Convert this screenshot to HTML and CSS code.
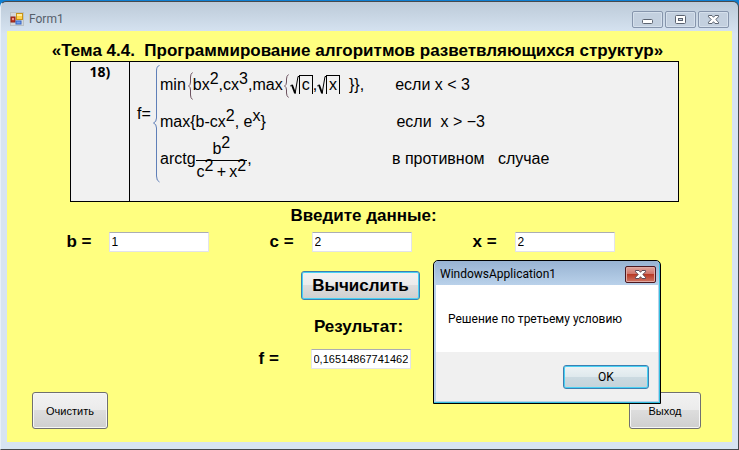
FILE: index.html
```html
<!DOCTYPE html>
<html lang="ru">
<head>
<meta charset="utf-8">
<title>Form1</title>
<link rel="stylesheet" href="styles.css">
</head>
<body>
<main class="window">
  <header class="titlebar">
    <svg class="app-icon" width="14" height="14" viewBox="0 0 14 14" aria-hidden="true">
      <rect x=".5" y=".5" width="13" height="13" fill="#d3d7da" stroke="#b9c0c5"/>
      <rect x="6.500" y="1.500" width="6" height="6" fill="#ffd34d" stroke="#c99416"/>
      <path d="M7 2h5v2H7z" fill="#ffec9c"/>
      <rect x="1" y="5" width="4" height="5" fill="#c0392b" stroke="#8e2015"/>
      <rect x="2" y="6" width="2" height="2" fill="#ef9186"/>
      <rect x="6" y="9" width="5" height="3" fill="#6f9df0" stroke="#3565c4"/>
    </svg>
    <span class="caption">Form1</span>
    <div class="controls">
      <button type="button" class="control" aria-label="Свернуть">
        <svg width="29" height="15" viewBox="0 0 29 15"><rect x="9.500" y="7.500" width="10" height="4" rx="1" fill="#fff" stroke="#5b6370"/></svg>
      </button>
      <button type="button" class="control" aria-label="Развернуть">
        <svg width="29" height="15" viewBox="0 0 29 15"><rect x="9.500" y="3.500" width="10" height="8" rx="1" fill="#fff" stroke="#5b6370"/><rect x="12.500" y="6.500" width="4" height="2" fill="#c4d0de" stroke="#5b6370"/></svg>
      </button>
      <button type="button" class="control" aria-label="Закрыть">
        <svg width="29" height="15" viewBox="0 0 29 15"><path d="M9.500 3.500h3.500l1.500 1.800L16 3.500h3.500v1.300l-2.700 2.700 2.700 2.700v1.300H16l-1.500-1.800-1.500 1.800H9.500v-1.300l2.700-2.700-2.700-2.700z" fill="#fff" stroke="#5b6370"/></svg>
      </button>
    </div>
  </header>

  <form class="client">
    <h1 class="heading">«Тема 4.4.&nbsp; Программирование алгоритмов разветвляющихся структур»</h1>

    <table class="task">
      <tr>
        <th scope="row" class="number">18)</th>
        <td class="formula">
          <div class="system">
            <span class="lhs">f=</span>
            <svg class="brace" width="7" height="118" viewBox="0 0 7 118" aria-hidden="true"><path d="M6.500.5Q3.500 1 3.500 6v47q0 4-3 5 3 1 3 5v48q0 5 3 6" fill="none" stroke="#5f7fb8"/></svg>
            <div class="cases">
              <div class="expr">min<svg class="small-brace" width="7" height="28" viewBox="0 0 7 28" aria-hidden="true"><path d="M6.500.5Q4.500 2 4.500 5v5q0 3-2 4 2 1 2 4v5q0 3 2 4.500" fill="none" stroke="#6d5360"/></svg>bx<sup>2</sup>,cx<sup>3</sup>,max<svg class="small-brace" width="7" height="24" viewBox="0 0 7 24" aria-hidden="true"><path d="M5.500.5Q3.500 2 3.500 5v3q0 3-2 4 2 1 2 4v3q0 3 2 4.500" fill="none" stroke="#6d5360"/></svg><svg class="root" width="9" height="19" viewBox="0 0 9 19" aria-hidden="true"><path d="M0 10.500l2-2M5 18L8 .5h1" fill="none" stroke="#000"/><path d="M2 9l3 8" fill="none" stroke="#000" stroke-width="2"/></svg><span class="radicand">c</span>,<svg class="root" width="9" height="19" viewBox="0 0 9 19" aria-hidden="true"><path d="M0 10.500l2-2M5 18L8 .5h1" fill="none" stroke="#000"/><path d="M2 9l3 8" fill="none" stroke="#000" stroke-width="2"/></svg><span class="radicand">x</span>&nbsp; }},</div>
              <div class="cond">&thinsp;если x &lt; 3</div>
              <div class="expr">max{b-cx<sup>2</sup>, e<sup>x</sup>}</div>
              <div class="cond">&nbsp;если&nbsp; x &gt; −3</div>
              <div class="expr with-fraction">arctg<span class="fraction"><span class="numerator">b<sup>2</sup></span><span class="denominator">c<sup>2</sup>&thinsp;+&thinsp;x<sup>2</sup></span></span>,</div>
              <div class="cond">в противном&nbsp;&nbsp; случае</div>
            </div>
          </div>
        </td>
      </tr>
    </table>

    <h2 class="subheading">Введите данные:</h2>
    <div class="fields">
      <div class="field"><label for="b">b =</label><input id="b" type="text" value="1"></div>
      <div class="field"><label for="c">c =</label><input id="c" type="text" value="2"></div>
      <div class="field"><label for="x">x =</label><input id="x" type="text" value="2"></div>
    </div>
    <button type="button" class="button calculate">Вычислить</button>
    <h2 class="subheading result-heading">Результат:</h2>
    <div class="field result"><label for="f">f =</label><input id="f" type="text" value="0,165148677414627"></div>
    <div class="footer">
      <button type="reset" class="button">Очистить</button>
      <button type="button" class="button">Выход</button>
    </div>
  </form>

  <section class="dialog" role="dialog" aria-labelledby="dialog-title">
    <header class="dialog-bar">
      <span id="dialog-title">WindowsApplication1</span>
      <button type="button" class="dialog-close" aria-label="Закрыть">
        <svg width="29" height="15" viewBox="0 0 29 15"><path d="M9.500 3.500h3.500l1.500 1.800L16 3.500h3.500v1.300l-2.700 2.700 2.700 2.700v1.300H16l-1.500-1.800-1.500 1.800H9.500v-1.300l2.700-2.700-2.700-2.700z" fill="#fff" stroke="#5c4a58"/></svg>
      </button>
    </header>
    <p class="message">Решение по третьему условию</p>
    <footer class="dialog-footer"><button type="button" class="ok">OK</button></footer>
  </section>
</main>
</body>
</html>
```
FILE: styles.css
```css
* { box-sizing: border-box; }

body {
  margin: 0;
  padding-top: 1px;
  background: #0f7fd2;
  font-family: "Liberation Sans", Arial, sans-serif;
  color: #000;
}

button, input { font: inherit; color: inherit; margin: 0; }

.window {
  position: relative;
  display: flex;
  flex-direction: column;
  min-height: calc(100vh - 1px);
  padding: 0 6px 7px 6px;
  border: 1px solid #46494d;
  border-left-color: #e8f0f8;
  border-radius: 6px 6px 0 0;
  background: linear-gradient(#bccad8, #d7e4f2 32px);
}

.titlebar {
  display: flex;
  align-items: center;
  height: 29px;
  padding: 5px 3px 0 3px;
  font: 12px/16px Roboto, sans-serif;
  color: #56606b;
}

.caption { margin-left: 5px; flex: 1; }
.controls { display: flex; gap: 2px; }

.control {
  display: flex;
  width: 31px;
  height: 17px;
  padding: 0;
  border: 1px solid #8695ac;
  border-radius: 2px;
  background: #c3d0df;
  box-shadow: inset 0 0 0 1px #d5e0ec;
}

.client {
  flex: 1;
  display: flex;
  flex-direction: column;
  background: #ffff80;
}

.heading, .subheading {
  margin: 0;
  font-size: 17px;
  line-height: 20px;
  font-weight: bold;
  text-align: center;
}

.heading { margin-top: 10px; padding-right: 24px; white-space: nowrap; }

.task {
  margin: 0 53px 0 63px;
  border-collapse: collapse;
  background: #f1f1f1;
}

.task th, .task td { border: 1px solid #000; vertical-align: top; }

.number {
  width: 59px;
  padding: 1px 0;
  font: bold 14px/18px "Open Sans", sans-serif;
}

.formula { height: 140px; padding: 2px 0 0 7px; font-size: 16px; }
.system { display: flex; }
.lhs { width: 16px; padding-top: 40px; line-height: 20px; }

.cases {
  display: grid;
  grid-template-columns: 232px 1fr;
  grid-auto-rows: 37px;
  line-height: 37px;
  white-space: nowrap;
  padding-top: 2px;
}

.expr, .cond { height: 37px; }
.brace { margin-top: 1px; }
.cases sup { font-size: 16px; line-height: 0; vertical-align: 6px; }
.small-brace { vertical-align: middle; }
.root { vertical-align: middle; }

.radicand {
  display: inline-block;
  padding: 0 2px;
  border: solid #000;
  border-width: 1px 1px 0;
  line-height: 18px;
}

.with-fraction { display: flex; align-items: center; }

.fraction {
  display: flex;
  flex-direction: column;
  padding-top: 4px;
  text-align: center;
  line-height: 22px;
}

.numerator { border-bottom: 1px solid #000; }
.denominator { padding: 0 1px; }

.subheading { margin-top: 4px; padding-right: 12px; }

.fields {
  display: flex;
  justify-content: center;
  gap: 61px;
  margin-top: 6px;
  padding-right: 58px;
}

.field { display: flex; align-items: center; }
.field label { width: 42px; font-weight: bold; font-size: 17px; line-height: 20px; }

.field input {
  width: 100px;
  height: 20px;
  padding: 0 2px;
  border: 1px solid #e2e3ea;
  border-top-color: #abadb3;
  border-radius: 1px;
  background: #fff;
  font-size: 12px;
}

.button {
  min-width: 76px;
  height: 37px;
  padding: 0 8px;
  border: 1px solid #707070;
  border-radius: 3px;
  background: linear-gradient(#f2f2f2, #ebebeb 48%, #dddddd 50%, #cfcfcf);
  box-shadow: inset 0 0 0 1px #f6f6f6;
  font-size: 11px;
}

.calculate {
  align-self: center;
  width: 119px;
  height: 29px;
  margin: 19px 18px 0 0;
  border-color: #3c7fb1;
  box-shadow: inset 0 0 0 1px #48d1f4;
  font-size: 17px;
  font-weight: bold;
}

.result-heading { margin-top: 17px; padding-right: 22px; }
.result { align-self: center; margin-top: 12px; padding-right: 70px; }
.result label { width: 52px; }
.result input { font-size: 11px; }

.footer {
  display: flex;
  justify-content: space-between;
  margin-top: auto;
  padding: 0 31px 13px 25px;
}

.footer .button + .button { min-width: 72px; }

.dialog {
  position: absolute;
  top: 258px;
  right: 77px;
  width: 228px;
  border: 1px solid #000;
  border-radius: 5px 5px 0 0;
  padding: 0 1px 1px;
  background: #b9d1ea;
  box-shadow: inset -1px -1px #35bfdf;
  font: 12px/16px Roboto, sans-serif;
}

.dialog-bar {
  display: flex;
  align-items: center;
  justify-content: space-between;
  height: 24px;
  padding: 2px 3px 0 5px;
  border-radius: 4px 4px 0 0;
  background: linear-gradient(#98b3d2, #b9d1ea);
}

.dialog-close {
  display: flex;
  width: 31px;
  height: 17px;
  padding: 0;
  border: 1px solid #4c1820;
  border-radius: 2px;
  background: linear-gradient(#dfa59d, #cf7268 48%, #b83a27 50%, #cf7564);
  box-shadow: inset 0 0 0 1px #e0aaa3;
}

.message { margin: 0 1px; padding: 26px 12px 25px; background: #fff; white-space: nowrap; }

.dialog-footer {
  display: flex;
  justify-content: flex-end;
  margin: 0 1px 1px;
  padding: 13px 9px 12px;
  background: #f0f0f0;
}

.ok {
  width: 86px;
  height: 24px;
  padding: 0;
  border: 1px solid #3c7fb1;
  border-radius: 3px;
  background: linear-gradient(#edf3f5, #dfe9ed 48%, #cbdae1 50%, #c5d3da);
  box-shadow: inset 0 0 0 1px #48d1f4;
}
```
